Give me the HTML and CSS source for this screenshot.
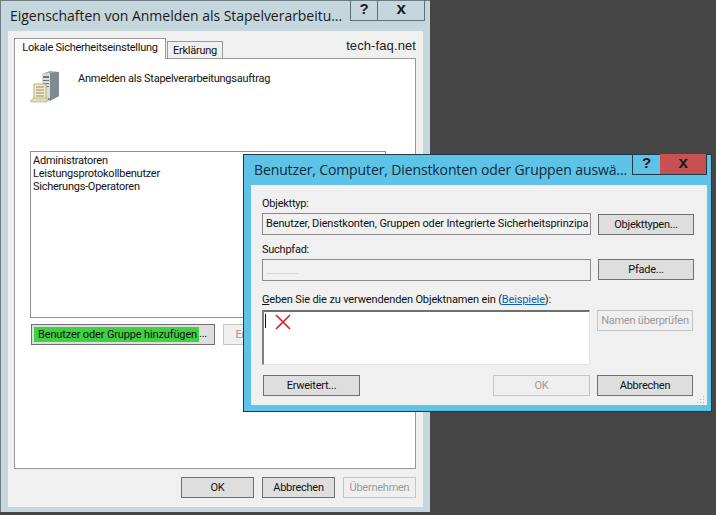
FILE: index.html
```html
<!DOCTYPE html>
<html lang="de">
<head>
<meta charset="utf-8">
<title>Eigenschaften</title>
<link rel="stylesheet" href="styles.css">
</head>
<body>
<section class="win main-win">
  <header class="titlebar">
    <h1 class="title">Eigenschaften von Anmelden als Stapelverarbeitu...</h1>
    <div class="caps">
      <span class="cap cap-help">?</span>
      <span class="cap cap-close">x</span>
    </div>
  </header>
  <div class="client">
    <div class="tabs">
      <span class="tab tab-active">Lokale Sicherheitseinstellung</span>
      <span class="tab">Erklärung</span>
      <span class="watermark">tech-faq.net</span>
    </div>
    <div class="panel">
      <div class="policy">
        <svg class="policy-icon" width="30" height="33" viewBox="0 0 30 33">
          <path d="M12 4 20 1 29 2 29 26 19 31 12 29Z" fill="#9aa4a8"/>
          <path d="M12 4 20 3 20 31 12 29Z" fill="#d9dde0"/>
          <path d="M20 3 29 2 29 26 20 31Z" fill="#7f8a8e"/>
          <path d="M13 6h6v2h-6zM13 10h6v1h-6zM13 13h6v1h-6zM13 16h6v1h-6z" fill="#6d777c"/>
          <path d="M4 14H16V29H4Z" fill="#f3eccb" stroke="#b9ad84"/>
          <path d="M6 17h8M6 20h8M6 23h8M6 26h8" stroke="#8f8a70"/>
          <path d="M0 31 4 28H17V32H1Z" fill="#e4dcb6" stroke="#b9ad84" stroke-width=".7"/>
          <path d="M18 28h2v2h-2z" fill="#5aa55a"/>
        </svg>
        <span class="policy-name">Anmelden als Stapelverarbeitungsauftrag</span>
      </div>
      <ul class="members">
        <li>Administratoren</li>
        <li>Leistungsprotokollbenutzer</li>
        <li>Sicherungs-Operatoren</li>
      </ul>
      <div class="member-actions">
        <button class="btn btn-add"><span class="highlight">Benutzer oder Gruppe hinzufügen</span>...</button>
        <button class="btn btn-disabled btn-remove">Entfernen</button>
      </div>
    </div>
    <div class="main-footer">
      <button class="btn btn-main">OK</button>
      <button class="btn btn-main">Abbrechen</button>
      <button class="btn btn-main btn-disabled">Übernehmen</button>
    </div>
  </div>
</section>

<section class="win dialog">
  <header class="titlebar">
    <h2 class="title">Benutzer, Computer, Dienstkonten oder Gruppen auswä...</h2>
    <div class="caps">
      <span class="cap cap-help">?</span>
      <span class="cap cap-close cap-red">x</span>
    </div>
  </header>
  <div class="client dialog-client">
    <label class="label label-type">Objekttyp:</label>
    <div class="row">
      <div class="field">Benutzer, Dienstkonten, Gruppen oder Integrierte Sicherheitsprinzipa</div>
      <button class="btn btn-side">Objekttypen...</button>
    </div>
    <label class="label label-path">Suchpfad:</label>
    <div class="row">
      <div class="field"><span class="blur-path"></span></div>
      <button class="btn btn-side">Pfade...</button>
    </div>
    <label class="label label-names"><u>G</u>eben Sie die zu verwendenden Objektnamen ein (<a class="link">Beispiele</a>):</label>
    <div class="row row-names">
      <div class="names">
        <span class="caret"></span>
        <svg class="red-x" width="16" height="16" viewBox="0 0 16 16"><path d="M1 1 15 15M15 1 1 15" stroke="#e0202c" stroke-width="1.7" fill="none"/></svg>
      </div>
      <button class="btn btn-side btn-disabled">Namen überprüfen</button>
    </div>
    <div class="row row-bottom">
      <button class="btn btn-adv">Erweitert...</button>
      <button class="btn btn-side btn-disabled btn-ok">OK</button>
      <button class="btn btn-side">Abbrechen</button>
    </div>
    <svg class="grip" width="8" height="8" viewBox="0 0 8 8"><path d="M6 0h1v1H6zM3 3h1v1H3zM6 3h1v1H6zM0 6h1v1H0zM3 6h1v1H3zM6 6h1v1H6z" fill="#b5b5b5"/></svg>
  </div>
</section>
</body>
</html>
```
FILE: styles.css
```css
* { box-sizing: border-box; }
html, body { margin: 0; height: 100%; }
body {
  background: #454545;
  font: 11px Roboto, "Liberation Sans", Arial, sans-serif;
  letter-spacing: -.25px;
  color: #111;
  overflow: hidden;
}
.win { position: absolute; display: flex; flex-direction: column; }
.main-win {
  left: 0; top: 0; width: 430px; height: 512px;
  background: #c5d6dd;
  border-left: 1px solid #6f7d84;
  border-top: 1px solid #6f7d84;
  padding: 0 7px 5px 7px;
}
.dialog {
  left: 243px; top: 154px; width: 469px; height: 258px;
  background: #5ec3e6;
  border: 1px solid #1c3c4c;
  padding: 0 4px 6px 7px;
}
.titlebar { display: flex; justify-content: space-between; align-items: flex-start; flex: none; height: 30px; }
.title {
  margin: 0; font: 400 14px "Open Sans", sans-serif; color: #1a1a1a; white-space: nowrap;
  padding: 5px 0 0 2px; letter-spacing: -.03px;
}
.dialog .title { padding: 5px 0 0 3px; color: #0c2d3c; letter-spacing: -.12px; }
.caps { display: flex; flex: none; border: 1px solid #5f6d74; border-top: 0; height: 21px; margin-top: -1px; }
.main-win .caps { margin-right: -2px; }
.dialog .caps { margin-right: 0; border-color: #1c3c4c; }
.cap { display: flex; align-items: center; justify-content: center; font: 700 15px "Liberation Sans", sans-serif; color: #1c1c1c; padding-bottom: 3px; }
.cap-help { width: 27px; border-right: 1px solid #5f6d74; }
.cap-close { width: 46px; font-size: 17px; }
.cap-red { background: #c75050; }
.dialog .cap-help { border-right: 0; }

.client { background: #f0f0f0; flex: 1; display: flex; flex-direction: column; }
.main-win .client { padding: 7px 7px 0 6px; }
.tabs { display: flex; align-items: flex-end; height: 20px; position: relative; z-index: 1; flex: none; }
.tab {
  height: 17px; width: 56px; background: #f0f0f0; border: 1px solid #999;
  border-bottom: 0; text-align: center; line-height: 17px; margin-left: 1px;
}
.tab-active {
  width: 152px; height: 21px; margin: 0 0 -1px; background: #fff; line-height: 18px; border-color: #999; white-space: nowrap;
}
.watermark { margin-left: auto; font: 13px "Liberation Sans", sans-serif; padding-bottom: 5px; color: #222; letter-spacing: .1px; }
.panel { height: 411px; background: #fff; border: 1px solid #989898; padding: 11px 15px 0 15px; display: flex; flex-direction: column; flex: none; }
.policy { display: flex; align-items: flex-start; height: 81px; }
.policy-icon { flex: none; }
.policy-name { margin-left: 18px; padding-top: 2px; }
.members {
  list-style: none; margin: 0; padding: 2px 2px; width: 356px; height: 167px;
  border: 1px solid #8f8f8f; line-height: 13px;
}
.member-actions { display: flex; gap: 8px; margin-top: 6px; padding-left: 1px; }
.btn {
  font: 11px Roboto, "Liberation Sans", Arial, sans-serif; letter-spacing: -.25px; color: #111; background: #dedede;
  border: 1px solid #707070; padding: 0; height: 21px; white-space: nowrap; flex: none;
}
.btn-disabled { background: #efefef; border-color: #c4c4c4; color: #9a9a9a; }
.btn-add { width: 184px; text-align: left; padding: 2px; position: relative; }
.highlight { display: inline-block; background: #3fd13f; width: 165px; height: 15px; line-height: 16px; padding-left: 4px; overflow: hidden; white-space: nowrap; vertical-align: top; letter-spacing: -.14px; }
.btn-remove { width: 70px; }
.main-footer { display: flex; justify-content: flex-end; gap: 8px; margin-top: 8px; }
.btn-main { width: 73px; }

.dialog-client { padding: 0 0 0 11px; position: relative; }
.label { display: block; height: 13px; line-height: 13px; }
.label-type { margin-top: 12px; }
.label-path { margin-top: 8px; }
.label-names { margin-top: 12px; letter-spacing: -.14px; }
.link { color: #0a5fc0; text-decoration: underline; }
.row { display: flex; gap: 7px; align-items: flex-start; margin-top: 3px; }
.field {
  width: 329px; height: 22px; background: #f0f0f0; border: 1px solid #8a8a8a; flex: none;
  padding: 3px 3px; overflow: hidden; white-space: nowrap; letter-spacing: -.15px;
}
.row .btn-side { width: 96px; }
.row:nth-of-type(1) .btn-side { margin-top: 1px; }
.blur-path { display: block; width: 32px; height: 1px; margin-top: 10px; background: #d8d8d8; }
.row-names { margin-top: 4px; }
.names { width: 328px; height: 55px; background: #fff; border: 1px solid #e4e4e4; border-top: 2px solid #707070; border-left: 2px solid #808080; flex: none; display: flex; align-items: flex-start; padding: 1px; }
.caret { width: 1px; height: 14px; background: #111; margin-top: 1px; }
.red-x { margin: 1px 0 0 9px; }
.row-bottom { margin: 10px 0 0 1px; }
.btn-adv { width: 97px; margin-right: 126px; }
.row-bottom .btn-ok { width: 97px; }
.grip { position: absolute; right: 2px; bottom: 1px; }
```
